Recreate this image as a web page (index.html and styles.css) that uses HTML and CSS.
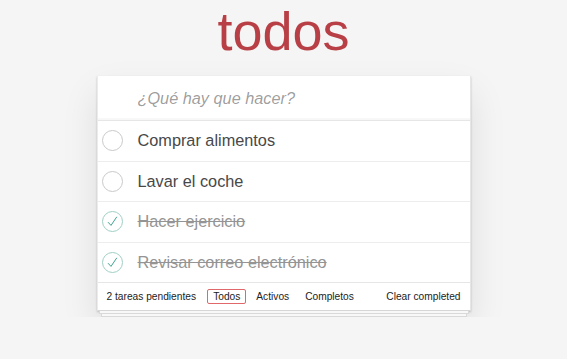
FILE: index.html
```html
<!DOCTYPE html>
<html lang="es">
<head>
  <meta charset="UTF-8">
  <meta name="viewport" content="width=device-width, initial-scale=1.0">
  <title>Todos</title>
  <link rel="stylesheet" href="styles.css">
</head>
<body>
  <section class="todoapp">
    <h1>todos</h1>

    <div class="card">
      <!-- Header -->
      <header class="header">
        <input class="new-todo" type="text" placeholder="¿Qué hay que hacer?">
      </header>

      <!-- List -->
      <ul class="todo-list">
        <li>
          <svg class="toggle" width="21" height="21" viewBox="0 0 21 21"><circle cx="10.5" cy="10.5" r="10" fill="none" stroke="#c9c9c9" stroke-width="1"/></svg>
          <label>Comprar alimentos</label>
        </li>
        <li>
          <svg class="toggle" width="21" height="21" viewBox="0 0 21 21"><circle cx="10.5" cy="10.5" r="10" fill="none" stroke="#c9c9c9" stroke-width="1"/></svg>
          <label>Lavar el coche</label>
        </li>
        <li class="completed">
          <svg class="toggle" width="21" height="21" viewBox="0 0 21 21"><circle cx="10.5" cy="10.5" r="10" fill="none" stroke="#9fcfc4" stroke-width="1"/><polyline points="6,11.2 9,14.4 14.8,5.8" fill="none" stroke="#3ea390" stroke-width="1"/></svg>
          <label>Hacer ejercicio</label>
        </li>
        <li class="completed">
          <svg class="toggle" width="21" height="21" viewBox="0 0 21 21"><circle cx="10.5" cy="10.5" r="10" fill="none" stroke="#9fcfc4" stroke-width="1"/><polyline points="6,11.2 9,14.4 14.8,5.8" fill="none" stroke="#3ea390" stroke-width="1"/></svg>
          <label>Revisar correo electrónico</label>
        </li>
      </ul>

      <!-- Footer -->
      <footer class="footer">
        <span class="todo-count">2 tareas pendientes</span>
        <ul class="filters">
          <li class="filter selected">Todos</li>
          <li class="filter">Activos</li>
          <li class="filter">Completos</li>
        </ul>
        <span class="clear-completed">Clear completed</span>
      </footer>
    </div>

    <!-- Stacked sheets under the card -->
    <div class="sheet sheet-1"></div>
    <div class="sheet sheet-2"></div>
  </section>
</body>
</html>
```

FILE: styles.css
```css
/* General Reset */
* {
  margin: 0;
  padding: 0;
  box-sizing: border-box;
}

body {
  font-family: 'Liberation Sans', Arial, sans-serif;
  background: #f5f5f5;
  color: #111;
  padding-top: 4px;
}

.todoapp {
  width: 374px;
  margin: 0 auto;
}

.todoapp h1 {
  font-size: 54px;
  line-height: 54px;
  font-weight: 400;
  text-align: center;
  color: #b83f45;
  margin-bottom: 18px;
}

/* Card */
.card {
  background: #fff;
  border-left: 1px solid #ebebeb;
  border-right: 1px solid #e6e6e6;
  border-bottom: 1px solid #d6d6d6;
  box-shadow: 0 1px 2px 0 rgba(0, 0, 0, 0.2), 0 17px 34px 0 rgba(0, 0, 0, 0.1);
}

.sheet {
  height: 3px;
  background: #f8f8f8;
  border: 1px solid #d9d9d9;
  border-top: none;
}

.sheet-1 {
  margin: 0 2px;
}

.sheet-2 {
  margin: 0 4px;
}

.header {
  height: 44px;
  box-shadow: inset 0 -2px 1px rgba(0, 0, 0, 0.03);
}

.new-todo {
  display: block;
  width: 100%;
  height: 44px;
  padding: 0 11px 0 40px;
  border: none;
  outline: none;
  background: transparent;
  font-family: inherit;
  font-size: 16.3px;
  color: #484848;
}

.new-todo::placeholder {
  font-style: italic;
  color: rgba(0, 0, 0, 0.4);
}

/* Todo list */
.todo-list {
  list-style: none;
  border-top: 1px solid #e6e6e6;
}

.todo-list li {
  display: flex;
  align-items: center;
  border-bottom: 1px solid #ededed;
}

.todo-list li:last-child {
  border-bottom: none;
}

.toggle {
  flex: none;
  margin-left: 4px;
}

.todo-list label {
  padding: 10px 10px 10px 15px;
  font-size: 16.3px;
  line-height: 1.2;
  color: #484848;
}

.todo-list li.completed label {
  color: #949494;
  text-decoration: line-through;
}

/* Footer */
.footer {
  display: grid;
  grid-template-columns: 1fr auto 1fr;
  align-items: center;
  height: 28px;
  padding: 0 9px;
  border-top: 1px solid #e6e6e6;
  font-size: 10.2px;
  color: #222;
}

.filters {
  list-style: none;
  display: flex;
  gap: 4px;
}

.filter {
  padding: 1px 5px;
  line-height: 11px;
  border: 1px solid #fff;
  border-radius: 2px;
}

.filter.selected {
  border-color: #e0686b;
}

.clear-completed {
  justify-self: end;
}
```
